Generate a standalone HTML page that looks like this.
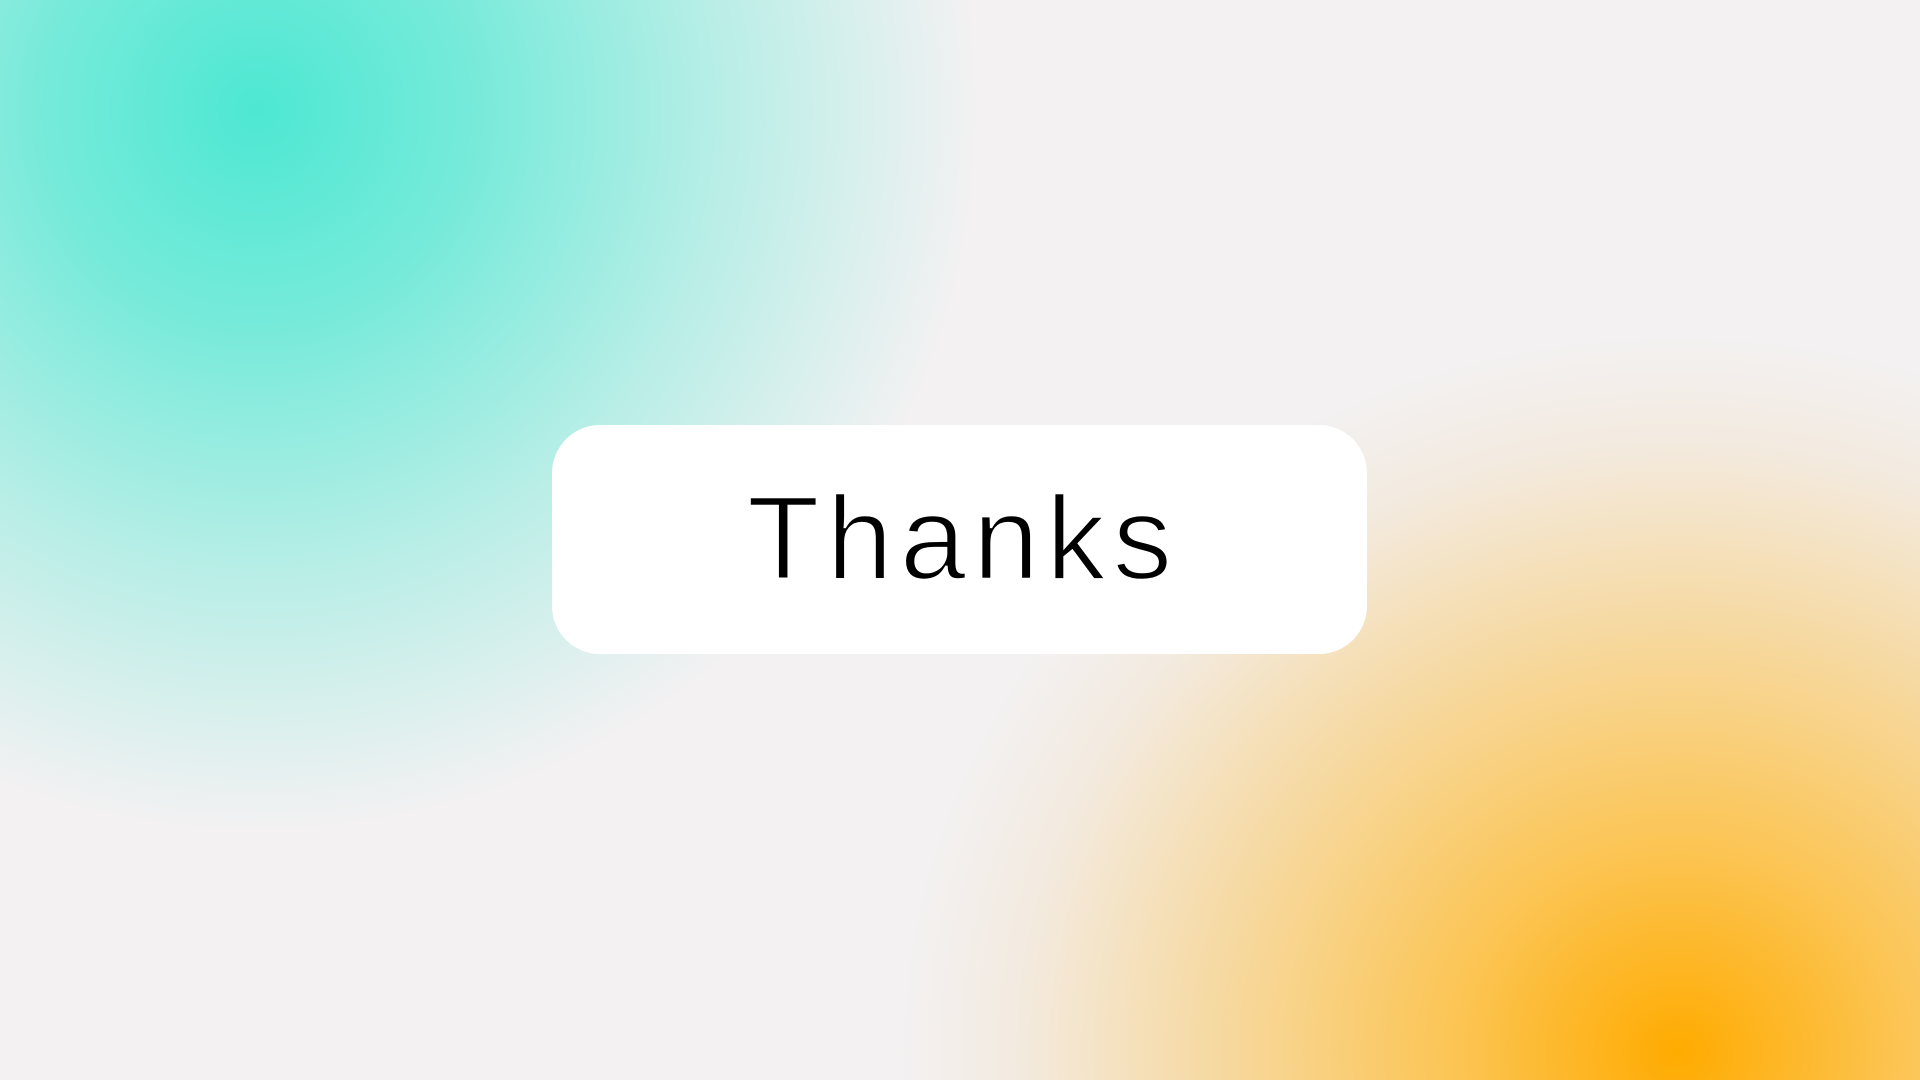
<!DOCTYPE html>
<html><head><meta charset="utf-8"><style>
html,body{margin:0;padding:0;width:1920px;height:1080px;overflow:hidden}
body{background:#f3f1f2;position:relative;font-family:"Liberation Sans",sans-serif}
.bg{position:absolute;inset:0;
background:
radial-gradient(ellipse 720px 720px at 257px 110px, rgba(77,232,210,1) 0%, rgba(77,232,210,0.75) 30%, rgba(77,232,210,0.35) 65%, rgba(77,232,210,0) 100%),
radial-gradient(ellipse 780px 720px at 1678px 1053px, rgba(255,171,0,1) 0%, rgba(253,190,60,0.85) 30%, rgba(248,205,120,0.65) 60%, rgba(243,222,190,0.35) 85%, rgba(243,241,242,0) 100%);}
.card{position:absolute;left:552px;top:425px;width:815px;height:229px;background:#fff;border-radius:48px;display:flex;align-items:center;justify-content:center}
.t{font-size:119px;letter-spacing:7px;color:#000;margin-left:7px;margin-top:-2px;-webkit-text-stroke:2.5px #fff}
</style></head><body>
<div class="bg"></div>
<div class="card"><span class="t">Thanks</span></div>
</body></html>
